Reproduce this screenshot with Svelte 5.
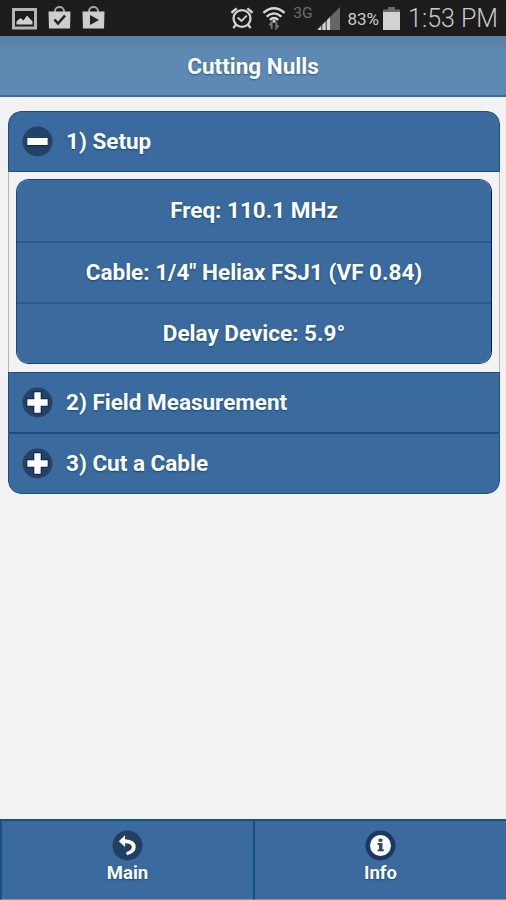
<script lang="ts">
  type Section = { title: string; open: boolean };

  let sections: Section[] = $state([
    { title: '1) Setup', open: true },
    { title: '2) Field Measurement', open: false },
    { title: '3) Cut a Cable', open: false },
  ]);

  const settings = ['Freq: 110.1 MHz', 'Cable: 1/4" Heliax FSJ1 (VF 0.84)', 'Delay Device: 5.9°'];

  function toggle(section: Section) {
    section.open = !section.open;
  }
</script>

<div class="screen">
  <div class="status-bar">
    <div class="notifications">
      <svg width="25" height="22" viewBox="0 0 25 22">
        <rect x="1.5" y="1.5" width="22" height="18.5" fill="#1c1c1c" stroke="#b4b4b4" stroke-width="3" />
        <path d="M4.5 16.5v-3l4-3.5 3 2.5 3.5-5 5.5 6v3z" fill="#d0d0d0" />
      </svg>
      <svg width="23" height="23" viewBox="0 0 23 23">
        <path d="M7 7V5a4.5 4 0 0 1 9 0v2" fill="none" stroke="#a8a8a8" stroke-width="2" />
        <path d="M.5 5.5h22L22 22.5H1z" fill="#cecece" />
        <path d="M6.5 13.5l3.5 4 7-8" fill="none" stroke="#222" stroke-width="2.6" />
      </svg>
      <svg width="23" height="23" viewBox="0 0 23 23">
        <path d="M7 7V5a4.5 4 0 0 1 9 0v2" fill="none" stroke="#a8a8a8" stroke-width="2" />
        <path d="M.5 5.5h22L22 22.5H1z" fill="#cecece" />
        <path d="M8 9l9 5-9 5z" fill="#222" />
      </svg>
    </div>
    <div class="indicators">
      <svg class="alarm" width="24" height="24" viewBox="0 0 25 24" fill="none" stroke="#d2d2d2">
        <circle cx="12.5" cy="12.5" r="8.8" stroke-width="2.4" />
        <path d="M8 11.500l4 3.500 5.500-5.500" stroke-width="2" />
        <path d="M1.500 6.500L7 2M23.500 6.500L18 2" stroke-width="2.600" />
        <path d="M6 19l-2.500 3.500M19 19l2.500 3.500" stroke-width="2.400" />
      </svg>
      <svg class="wifi" width="24" height="26" viewBox="0 0 26 26" fill="none" stroke="#d8d8d8" stroke-width="2.5">
        <path d="M1.500 7.500q11.500-10 23 0" />
        <path d="M5 11.500q8-7 16 0" />
        <path d="M8.500 15q4.500-4 9 0" />
        <path d="M13 15v3" stroke-width="3" />
        <path d="M10.500 25v-7l-2.500 3M15.500 17v7l2.500-3" stroke="#777" stroke-width="2" />
      </svg>
      <span class="network">3G</span>
      <svg class="signal" width="23" height="23" viewBox="0 0 23 23">
        <path d="M0 23L23 0v23z" fill="#666" />
        <path d="M1 23v-1l3-3v4zM5.500 23v-5.500l3-3V23zM10 23V13l3-3v13z" fill="#d2d2d2" />
      </svg>
      <span class="percent">83%</span>
      <svg class="battery" width="17" height="23" viewBox="0 0 17 23">
        <path d="M5 0h7v2.500h5V7H0V2.500h5z" fill="#6c6c6c" />
        <rect y="5" width="17" height="18" fill="#d2d2d2" />
      </svg>
      <span class="clock">1:53 PM</span>
    </div>
  </div>

  <header class="header">
    <h1>Cutting Nulls</h1>
  </header>

  <main class="content">
    <div class="accordion">
      {#each sections as section}
        <button class="section-head" onclick={() => toggle(section)}>
          <svg width="31" height="31" viewBox="0 0 32 32">
            <circle cx="16" cy="16" r="15.5" fill="#234266" />
            {#if section.open}
              <path d="M5 12h22v9H5z" fill="#0d2a55" />
              <path d="M5.500 12.500h21v7h-21z" fill="#fff" />
            {:else}
              <path d="M11.500 4.500h9v7h7v9h-7v7h-9v-7h-7v-9h7z" fill="#0d2550" />
              <path d="M12.700 5.500h6.600v7.200h7.200v6.600h-7.200v7.200h-6.600v-7.200H5.500v-6.600h7.200z" fill="#fff" />
            {/if}
          </svg>
          <span>{section.title}</span>
        </button>
        {#if section.open}
          <div class="section-body">
            <div class="settings">
              {#each settings as setting}
                <button class="setting">{setting}</button>
              {/each}
            </div>
          </div>
        {/if}
      {/each}
    </div>
  </main>

  <nav class="navbar">
    <button class="tab">
      <svg width="31" height="31" viewBox="0 0 32 32">
        <circle cx="16" cy="16" r="15.5" fill="#213f62" />
        <path d="M7 11.500L13.500 5.500v4q11 .5 11 8 0 6-9 8.500l-1-3q6-2 6-5.500 0-3.500-7-3.800v3.800z" fill="#fff" />
      </svg>
      <span>Main</span>
    </button>
    <button class="tab">
      <svg width="31" height="31" viewBox="0 0 32 32">
        <circle cx="16" cy="16" r="15.5" fill="#1c3860" />
        <circle cx="16" cy="16" r="10.8" fill="#fff" />
        <path d="M14 9h4v3h-4zM13 13.500h5v6.500h1.500v2H13v-2h1.500v-4.500H13z" fill="#304660" />
      </svg>
      <span>Info</span>
    </button>
  </nav>
</div>

<style>
  :global(body) {
    margin: 0;
  }

  .screen {
    display: flex;
    flex-direction: column;
    height: 900px;
    background: #f2f2f2;
    font-family: Roboto, sans-serif;
    overflow: hidden;
  }

  button {
    margin: 0;
    padding: 0;
    border: none;
    font: inherit;
    color: #fff;
    background: #3b6b9e;
    text-shadow: 0 1px 2px #16477a;
    cursor: pointer;
  }

  svg {
    display: block;
    flex: none;
  }

  .status-bar {
    display: flex;
    justify-content: space-between;
    height: 36px;
    box-sizing: border-box;
    padding: 0 8px 0 12px;
    background: #1c1c1c;
    color: #cbcbcb;
  }

  .notifications {
    display: flex;
    align-items: flex-start;
    gap: 11px;
    padding-top: 6px;
  }

  .notifications svg:first-child {
    margin-top: 2px;
  }

  .indicators {
    display: flex;
    align-items: flex-start;
  }

  .alarm {
    margin-top: 6px;
  }

  .wifi {
    margin: 5px 0 0 8px;
  }

  .network {
    margin: 4px 0 0 7px;
    font-size: 15.5px;
    line-height: 19px;
    color: #6e6e6e;
  }

  .signal {
    margin: 7px 0 0 5px;
  }

  .percent {
    margin: 9px 0 0 7px;
    font-size: 17px;
    line-height: 20px;
  }

  .battery {
    margin: 7px 0 0 4px;
  }

  .clock {
    margin: 3px 0 0 8px;
    font-size: 25px;
    line-height: 31px;
    font-weight: 300;
    white-space: nowrap;
  }

  .header {
    display: flex;
    align-items: center;
    justify-content: center;
    height: 61px;
    box-sizing: border-box;
    padding-top: 1px;
    background: linear-gradient(#5981a9, #5e89b2 30%);
    border-bottom: 2px solid #396b9d;
  }

  h1 {
    margin: 0;
    font-size: 22.5px;
    font-weight: 700;
    color: #fff;
    text-shadow: 0 1px 2px #2b5c8e;
  }

  .content {
    flex: 1;
    padding: 14px 6px 0 8px;
  }

  .accordion {
    border-radius: 13px;
    overflow: hidden;
  }

  .section-head {
    display: flex;
    align-items: center;
    gap: 13px;
    width: 100%;
    height: 61px;
    box-sizing: border-box;
    padding: 0 0 1px 13px;
    border: 1px solid #18507f;
    font-size: 22.5px;
    font-weight: 700;
  }

  .section-head:first-child {
    border-radius: 13px 13px 0 0;
  }

  .section-head:last-child {
    border-radius: 0 0 13px 13px;
  }

  .section-body {
    padding: 7px 7px 8px;
    border: 1px solid #b5b5b5;
    border-width: 0 1px;
  }

  .settings {
    display: flex;
    flex-direction: column;
    border: 1px solid #12487c;
    border-right-color: #06137a;
    border-radius: 13px;
    overflow: hidden;
  }

  .setting {
    height: 61px;
    box-sizing: border-box;
    padding-bottom: 2px;
    font-size: 22.5px;
    font-weight: 700;
  }

  .setting + .setting {
    border-top: 2px solid #2a5a8a;
  }

  .navbar {
    display: flex;
    height: 81px;
  }

  .tab {
    flex: 1;
    display: flex;
    flex-direction: column;
    align-items: center;
    box-sizing: border-box;
    padding-top: 9px;
    border-top: 2px solid #18507f;
    border-left: 2px solid #18507f;
    border-bottom: 1px solid #7794b8;
    font-size: 18.5px;
    line-height: 24px;
    font-weight: 700;
  }
</style>
